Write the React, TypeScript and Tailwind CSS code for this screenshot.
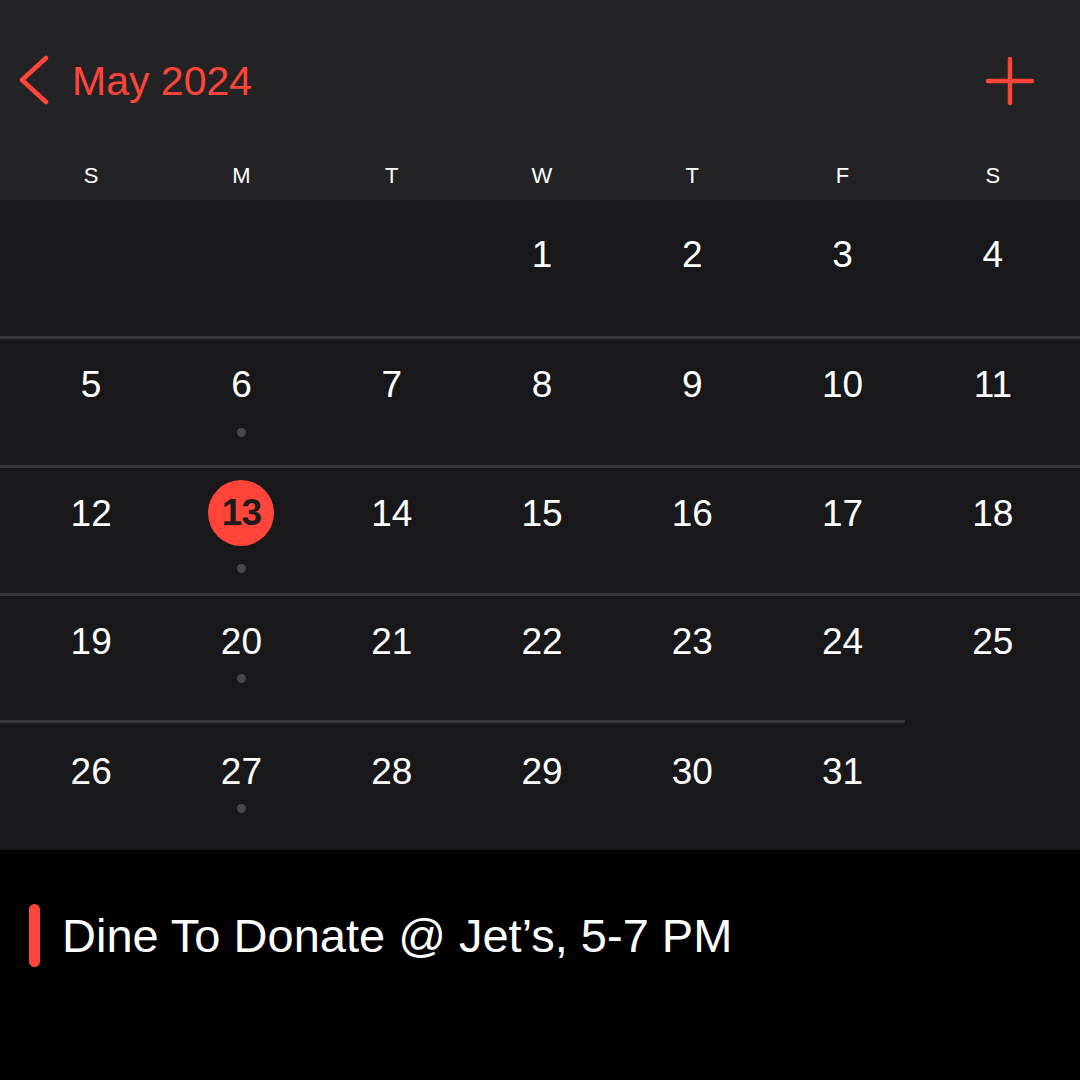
const weekdays = ["S", "M", "T", "W", "T", "F", "S"];

type Day = { n: number | null; dot?: boolean; today?: boolean };

const rows: { days: Day[]; h: string; pt: string; dotMt: string }[] = [
  {
    days: [{ n: null }, { n: null }, { n: null }, { n: 1 }, { n: 2 }, { n: 3 }, { n: 4 }],
    h: "h-[136px]",
    pt: "pt-[21px]",
    dotMt: "mt-[11px]",
  },
  {
    days: [{ n: 5 }, { n: 6, dot: true }, { n: 7 }, { n: 8 }, { n: 9 }, { n: 10 }, { n: 11 }],
    h: "h-[126px]",
    pt: "pt-[12px]",
    dotMt: "mt-[11px]",
  },
  {
    days: [{ n: 12 }, { n: 13, dot: true, today: true }, { n: 14 }, { n: 15 }, { n: 16 }, { n: 17 }, { n: 18 }],
    h: "h-[125px]",
    pt: "pt-[12px]",
    dotMt: "mt-[18px]",
  },
  {
    days: [{ n: 19 }, { n: 20, dot: true }, { n: 21 }, { n: 22 }, { n: 23 }, { n: 24 }, { n: 25 }],
    h: "h-[124px]",
    pt: "pt-[12px]",
    dotMt: "mt-0",
  },
  {
    days: [{ n: 26 }, { n: 27, dot: true }, { n: 28 }, { n: 29 }, { n: 30 }, { n: 31 }, { n: null }],
    h: "h-[127px]",
    pt: "pt-[15px]",
    dotMt: "mt-0",
  },
];

function Separator({ short }: { short?: boolean }) {
  return <div className={`h-[3px] bg-[#38383a] ${short ? "w-[905px]" : "w-full"}`} />;
}

function WeekRow({ row }: { row: (typeof rows)[number] }) {
  return (
    <div className={`grid grid-cols-7 pl-4 pr-3 ${row.h} ${row.pt}`}>
      {row.days.map((d, i) => (
        <div key={i} className="flex flex-col items-center">
          {d.n !== null && (
            <>
              <div className="h-[66px] flex items-center justify-center">
                {d.today ? (
                  <span className="size-[66px] rounded-full bg-[#ff453a] flex items-center justify-center text-[37px] font-bold text-[#1c1c1e] tracking-tight">
                    {d.n}
                  </span>
                ) : (
                  <span className="text-[37px] text-white leading-none">{d.n}</span>
                )}
              </div>
              {d.dot && <span className={`size-[9px] rounded-full bg-[#48484a] ${row.dotMt}`} />}
            </>
          )}
        </div>
      ))}
    </div>
  );
}

export default function App() {
  return (
    <div className="w-[1080px] h-[1080px] bg-black flex flex-col font-['Liberation_Sans',Arial,sans-serif]">
      <div className="h-[200px] bg-[#232325] flex flex-col">
        <div className="mt-[41px] h-[80px] flex items-center px-[18px]">
          <svg width="34" height="52" viewBox="0 0 34 52" className="shrink-0">
            <polyline
              points="28,3 4,25 28,47"
              fill="none"
              stroke="#ff453a"
              strokeWidth="4.5"
              strokeLinecap="round"
              strokeLinejoin="round"
            />
          </svg>
          <span className="ml-[20px] text-[41px] text-[#ff453a] leading-none">May 2024</span>
          <svg width="50" height="50" viewBox="0 0 50 50" className="ml-auto mr-[27px]">
            <path d="M25 3 V47 M3 25 H47" stroke="#ff453a" strokeWidth="4.5" strokeLinecap="round" />
          </svg>
        </div>
        <div className="mt-[40px] h-[30px] grid grid-cols-7 pl-4 pr-3 items-center">
          {weekdays.map((w, i) => (
            <span key={i} className="text-center text-[22px] text-white leading-none">
              {w}
            </span>
          ))}
        </div>
      </div>

      <div className="bg-[#18181a] flex flex-col">
        <WeekRow row={rows[0]} />
        <Separator />
        <WeekRow row={rows[1]} />
        <Separator />
        <WeekRow row={rows[2]} />
        <Separator />
        <WeekRow row={rows[3]} />
        <Separator short />
        <WeekRow row={rows[4]} />
      </div>

      <div className="flex items-center mt-[54px] pl-[29px]">
        <span className="w-[11px] h-[63px] rounded-full bg-[#ff453a]" />
        <span className="ml-[22px] text-[47px] text-white leading-none">Dine To Donate @ Jet’s, 5-7 PM</span>
      </div>
    </div>
  );
}
